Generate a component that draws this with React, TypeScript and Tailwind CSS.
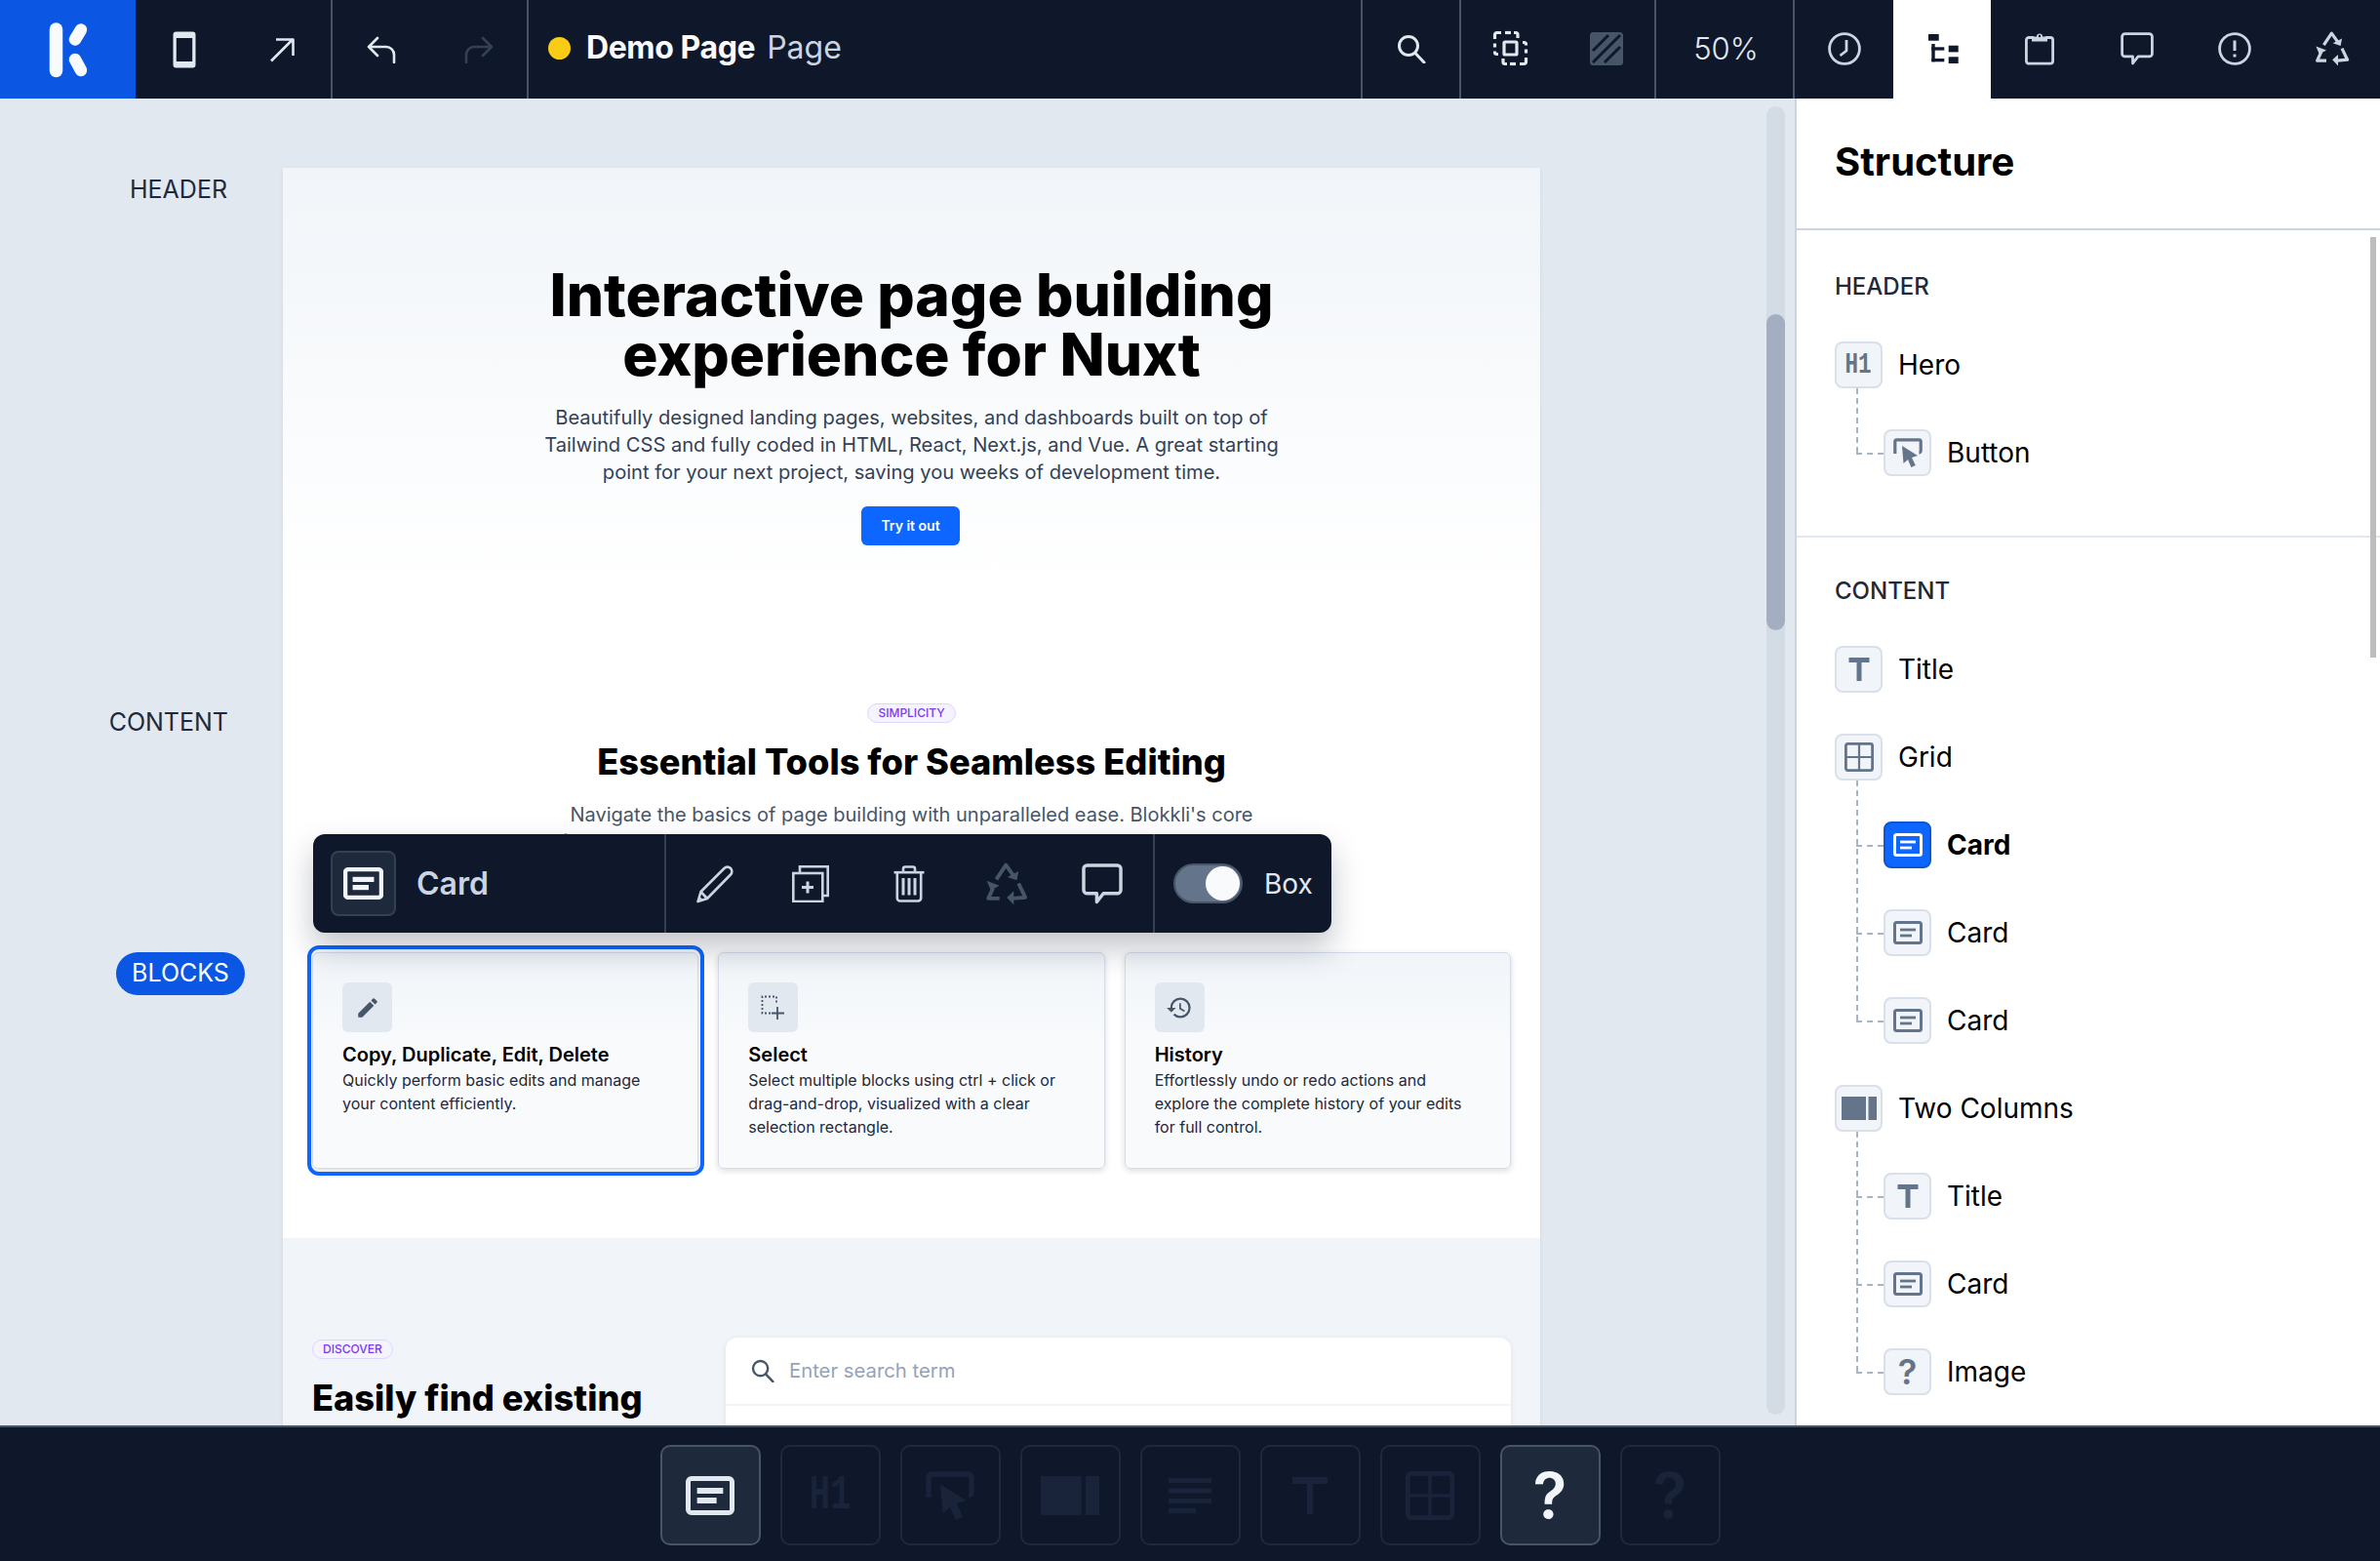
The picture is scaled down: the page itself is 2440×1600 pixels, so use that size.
import React from "react";
import { MdEdit, MdHistory } from "react-icons/md";

const S = { fill: "none", stroke: "currentColor", strokeLinecap: "round" as const, strokeLinejoin: "round" as const };

function Logo() {
  return (
    <svg width="139" height="100" viewBox="0 0 139 100" fill="none" stroke="#f8fafc" strokeLinecap="round">
      <path d="M57.5 30V72.5" strokeWidth="13.5" />
      <path d="M83 30.5L77 40.5" strokeWidth="12.5" />
      <path d="M77 61L83 72" strokeWidth="12.5" />
    </svg>
  );
}
function Phone() {
  return (
    <svg width="24" height="38" viewBox="0 0 24 38">
      <path fillRule="evenodd" fill="currentColor" d="M3.5 0.5h17a3 3 0 0 1 3 3v31a3 3 0 0 1-3 3h-17a3 3 0 0 1-3-3v-31a3 3 0 0 1 3-3zM3.8 7v24h16.4V7z" />
    </svg>
  );
}
function ArrowNE() {
  return (
    <svg width="26" height="26" viewBox="0 0 26 26" {...S} strokeWidth="2.6" strokeLinecap="butt">
      <path d="M2 24.5L24 2.5M7 2.5H24.5V19" />
    </svg>
  );
}
function Undo({ flip }: { flip?: boolean }) {
  return (
    <svg width="30" height="28" viewBox="0 0 30 28" {...S} strokeWidth="2.6" className={flip ? "-scale-x-100" : ""}>
      <path d="M11 2L2 11L11 20M2 11H20a8 8 0 0 1 8 8V27" />
    </svg>
  );
}
function Search({ size = 30 }: { size?: number }) {
  return (
    <svg width={size} height={size} viewBox="0 0 30 30" {...S} strokeWidth="3">
      <circle cx="12" cy="12" r="9.5" />
      <path d="M19 19.5L28 29" />
    </svg>
  );
}
function SelectCorner() {
  return (
    <>
      <path d="M2.5 9V4.5a2 2 0 0 1 2-2H9" />
      <path d="M13 2.5h6" />
      <path d="M22 2.5h2a2 2 0 0 1 2 2V8" />
      <path d="M2.5 13.5v4" />
      <path d="M2.5 21.5v1a2 2 0 0 0 2 2h1.5" />
    </>
  );
}
function SelectIcon() {
  return (
    <svg width="37" height="37" viewBox="0 0 37 37" fill="none" stroke="currentColor" strokeWidth="3.2">
      <SelectCorner />
      <g transform="rotate(180 18.5 18.5)">
        <SelectCorner />
      </g>
      <rect x="12" y="12" width="13" height="13" rx="1" />
    </svg>
  );
}
function Hatch() {
  return (
    <svg width="34" height="34" viewBox="0 0 34 34">
      <rect width="34" height="34" rx="3.5" fill="#475569" />
      <path d="M3 19L19 3M3 31L31 3M15 31L31 15" stroke="#0f172a" strokeWidth="3" />
    </svg>
  );
}
function Clock() {
  return (
    <svg width="34" height="34" viewBox="0 0 34 34" {...S} strokeWidth="2.8" strokeLinecap="butt">
      <circle cx="17" cy="17" r="15.4" />
      <path d="M19 8V19L12.5 24" />
    </svg>
  );
}
function Tree() {
  return (
    <svg width="31" height="30" viewBox="0 0 31 30" fill="#0f172a">
      <rect width="10.7" height="6.7" />
      <rect x="3.3" y="10" width="3.4" height="18.3" />
      <rect x="3.3" y="13.3" width="13" height="3.3" />
      <rect x="3.3" y="25" width="13" height="3.3" />
      <rect x="20.7" y="11.7" width="10" height="6.7" />
      <rect x="20.7" y="23.3" width="10" height="6.7" />
    </svg>
  );
}
function Clipboard() {
  return (
    <svg width="30" height="34" viewBox="0 0 30 34" {...S} strokeWidth="2.8">
      <path d="M8 5.5H4a2.6 2.6 0 0 0-2.6 2.6v21.5A2.6 2.6 0 0 0 4 32.2h22a2.6 2.6 0 0 0 2.6-2.6V8.1A2.6 2.6 0 0 0 26 5.5h-4" />
      <path fill="currentColor" stroke="none" d="M7 4.5h5a3 3 0 0 1 6 0h5v5H7z" />
      <circle cx="15" cy="4" r="1.2" fill="#0f172a" stroke="none" />
    </svg>
  );
}
function Comment({ size = 34 }: { size?: number }) {
  return (
    <svg width={size} height={size} viewBox="0 0 34 34" {...S} strokeWidth="2.8">
      <path d="M4.5 1.6H29.5a2.9 2.9 0 0 1 2.9 2.9V22a2.9 2.9 0 0 1-2.9 2.9H18L12.5 32V24.9H4.5A2.9 2.9 0 0 1 1.6 22V4.5A2.9 2.9 0 0 1 4.5 1.6z" />
    </svg>
  );
}
function Alert() {
  return (
    <svg width="34" height="34" viewBox="0 0 34 34" {...S} strokeWidth="2.8">
      <circle cx="17" cy="17" r="15.4" />
      <path d="M17 8.5V19" strokeWidth="3" strokeLinecap="butt" />
      <path d="M17 22.5V25.5" strokeWidth="3" strokeLinecap="butt" />
    </svg>
  );
}
function RecycleIcon({ size = 44 }: { size?: number }) {
  return (
    <svg width={size} height={size} viewBox="0 0 43 45" fill="none" stroke="currentColor" strokeWidth="4" strokeLinejoin="round">
      <path d="M10.7 17.7L20.7 2.7L29 14.3" />
      <path fill="currentColor" stroke="none" d="M34 9.3L32.3 18.7L22.3 15.3Z" />
      <path d="M14 37.7H2.3L7.3 26.7" />
      <path fill="currentColor" stroke="none" d="M0.7 19.3L14 24.3L5 29.3Z" />
      <path d="M34 22L41 36.5L28 37.7" />
      <path fill="currentColor" stroke="none" d="M29 30V44.3L21.7 36.7Z" />
    </svg>
  );
}
function CardIcon({ w = 30, h = 24, sw = 3, line = 2.8 }: { w?: number; h?: number; sw?: number; line?: number }) {
  return (
    <svg width={w} height={h} viewBox="0 0 30 24" fill="none" stroke="currentColor" strokeWidth={sw}>
      <rect x="1.5" y="1.5" width="27" height="21" rx="2" />
      <path d="M7 9H23" strokeWidth={line} />
      <path d="M7 15H19" strokeWidth={line} />
    </svg>
  );
}
function CursorIcon({ size = 30 }: { size?: number }) {
  return (
    <svg width={size} height={size} viewBox="0 0 30 30" fill="none" stroke="currentColor">
      <path d="M1.8 16V3.5A1.8 1.8 0 0 1 3.6 1.8H26.4A1.8 1.8 0 0 1 28.2 3.5V13A1.8 1.8 0 0 1 26.4 14.8" strokeWidth="3.2" />
      <path fill="currentColor" stroke="none" d="M9 8L25 18L19 20L22.8 28L18.4 30L15 22L10.5 26Z" />
    </svg>
  );
}
function GridIcon({ size = 30 }: { size?: number }) {
  return (
    <svg width={size} height={size} viewBox="0 0 30 30" fill="none" stroke="currentColor" strokeWidth="2.8">
      <rect x="1.4" y="1.4" width="27.2" height="27.2" rx="2" />
      <path d="M15 1.4V28.6M1.4 15H28.6" strokeWidth="2.2" />
    </svg>
  );
}
function ColumnsIcon({ w = 36, h = 24 }: { w?: number; h?: number }) {
  return (
    <svg width={w} height={h} viewBox="0 0 36 24" fill="currentColor">
      <rect width="25" height="24" />
      <rect x="27.5" width="8.5" height="24" />
    </svg>
  );
}
function TIcon({ w = 22, h = 24 }: { w?: number; h?: number }) {
  return (
    <svg width={w} height={h} viewBox="0 0 22 24" fill="currentColor">
      <path d="M0.5 0H21.5V5H13.5V24H8.5V5H0.5Z" />
    </svg>
  );
}
function ThinT() {
  return (
    <svg width="36" height="38" viewBox="0 0 36 38" fill="currentColor">
      <path d="M0 0H36V7H21V38H15V7H0Z" />
    </svg>
  );
}
function LinesIcon() {
  return (
    <svg width="44" height="36" viewBox="0 0 44 36" fill="currentColor">
      <rect width="44" height="5" />
      <rect y="10.5" width="44" height="5" />
      <rect y="21" width="44" height="5" />
      <rect y="31" width="28" height="5" />
    </svg>
  );
}
function Pencil() {
  return (
    <svg width="38" height="40" viewBox="0 0 38 40" {...S} strokeWidth="2.6">
      <path d="M1.5 38L4.5 28L28.5 4A4.4 4.4 0 0 1 35 10.5L11 35L1.5 38zM4.5 28L11 35" />
      <path fill="currentColor" stroke="none" d="M1 38.5L3 32.5L7.5 37z" />
    </svg>
  );
}
function Duplicate() {
  return (
    <svg width="38" height="38" viewBox="0 0 38 38" fill="none" stroke="currentColor" strokeWidth="2.6">
      <rect x="1.3" y="8" width="30" height="29" />
      <path d="M8 7.5V1.3H36.7V31H32" />
      <path d="M10 22.5H22M16 16.5V28.5" strokeWidth="3" />
    </svg>
  );
}
function Trash() {
  return (
    <svg width="32" height="38" viewBox="0 0 32 38" fill="none" stroke="currentColor" strokeWidth="2.6">
      <path d="M0.5 7.2H31.5" />
      <path d="M10 7V3.5A2 2 0 0 1 12 1.5H20A2 2 0 0 1 22 3.5V7" />
      <path d="M3.8 7.2V33.5A3 3 0 0 0 6.8 36.5H25.2A3 3 0 0 0 28.2 33.5V7.2" />
      <path d="M10 13V30.5M16 13V30.5M22 13V30.5" strokeWidth="3" />
    </svg>
  );
}
function MarqueePlus() {
  return (
    <svg width="26" height="26" viewBox="0 0 26 26" fill="none" stroke="#475569" strokeWidth="1.8">
      <path d="M1.5 15V1.5H16V9" strokeDasharray="2 2" />
      <path d="M1.5 17V18.5H10" strokeDasharray="2 2" />
      <path d="M17 12V25M11 18.5H24" />
    </svg>
  );
}

function TopBtn({ children, className = "w-[100px]" }: { children: React.ReactNode; className?: string }) {
  return <div className={`flex shrink-0 items-center justify-center ${className}`}>{children}</div>;
}

function Label({ children, className = "" }: { children: React.ReactNode; className?: string }) {
  return <div className={`absolute text-[25px] leading-8 text-[#1e293b] ${className}`}>{children}</div>;
}

function Badge({ children }: { children: React.ReactNode }) {
  return (
    <span className="flex h-5 items-center rounded-full border border-[#ddd6fe] bg-[#f5f3ff] px-[10px] text-[12px] font-medium uppercase text-[#7c3aed]">
      {children}
    </span>
  );
}

function FeatureCard({ icon, title, text }: { icon: React.ReactNode; title: string; text: React.ReactNode }) {
  return (
    <div className="h-[222px] rounded-md border border-[#d5dce8] bg-gradient-to-b from-[#f1f5f9] to-[#f8fafc] to-40% px-[30px] pt-[30px] shadow-[0_2px_6px_rgba(15,23,42,0.15)]">
      <div className="flex h-[51px] w-[51px] items-center justify-center rounded-md bg-[#e2e8f0] text-[#475569]">{icon}</div>
      <div className="mt-[9px] text-[20px] font-semibold leading-7 text-black">{title}</div>
      <div className="text-[16px] leading-[24px] text-[#1e293b]">{text}</div>
    </div>
  );
}

type Node = { label: string; icon: React.ReactNode; active?: boolean; children?: Node[] };

const h1 = (
  <span className="inline-block scale-x-75 font-['Liberation_Mono',monospace] text-[30px] font-bold leading-none">H1</span>
);
const q = <span className="text-[36px] font-semibold leading-none">?</span>;

function IconBox({ node }: { node: Node }) {
  return (
    <div
      className={`flex h-12 w-[49px] shrink-0 items-center justify-center rounded-lg border-2 ${
        node.active ? "border-[#0b57d0] bg-[#0d66ff] text-white" : "border-[#d9e0ea] bg-[#f1f5f9] text-[#64748b]"
      }`}
    >
      {node.icon}
    </div>
  );
}

function TreeRow({ node }: { node: Node }) {
  return (
    <div className="flex h-12 items-center gap-4">
      <IconBox node={node} />
      <span className={`text-[28px] leading-none text-black ${node.active ? "font-bold text-[#0f172a]" : ""}`}>{node.label}</span>
    </div>
  );
}

function TreeItem({ node }: { node: Node }) {
  const kids = node.children ?? [];
  return (
    <div className="relative">
      <TreeRow node={node} />
      {kids.length > 0 && (
        <div className="absolute bottom-6 left-[22px] top-12 border-l-2 border-dashed border-[#a8b4c8]" />
      )}
      {kids.map((k, i) => (
        <div key={i} className="relative mt-[42px] pl-[50px]">
          <div className="absolute left-[22px] top-6 w-[28px] border-t-2 border-dashed border-[#a8b4c8]" />
          <TreeRow node={k} />
        </div>
      ))}
    </div>
  );
}

const card = <CardIcon />;
const headerTree: Node[] = [{ label: "Hero", icon: h1, children: [{ label: "Button", icon: <CursorIcon /> }] }];
const contentTree: Node[] = [
  { label: "Title", icon: <TIcon /> },
  {
    label: "Grid",
    icon: <GridIcon />,
    children: [
      { label: "Card", icon: card, active: true },
      { label: "Card", icon: card },
      { label: "Card", icon: card },
    ],
  },
  {
    label: "Two Columns",
    icon: <ColumnsIcon />,
    children: [
      { label: "Title", icon: <TIcon /> },
      { label: "Card", icon: card },
      { label: "Image", icon: q },
    ],
  },
];

function Tile({ active, children }: { active?: boolean; children: React.ReactNode }) {
  return (
    <div
      className={`flex h-[103px] w-[103px] items-center justify-center rounded-[10px] border-2 ${
        active ? "border-[#475569] bg-[#1e293b] text-[#e2e8f0]" : "border-[#1e293b] text-[#19233a]"
      }`}
    >
      {children}
    </div>
  );
}

export default function App() {
  return (
    <div className="relative flex h-[1600px] w-[2440px] flex-col overflow-hidden bg-white font-['Inter',sans-serif]">
      {/* Top bar */}
      <header className="flex h-[101px] shrink-0 bg-[#0f172a] text-[#e2e8f0]">
        <div className="w-[139px] shrink-0 bg-[#0b57e3]">
          <Logo />
        </div>
        <TopBtn><Phone /></TopBtn>
        <TopBtn className="w-[102px] border-r-2 border-[#475569]"><ArrowNE /></TopBtn>
        <TopBtn><Undo /></TopBtn>
        <TopBtn className="w-[101px] border-r-2 border-[#475569] text-[#334155]"><Undo flip /></TopBtn>
        <div className="flex flex-1 items-center gap-3 pb-[3px] pl-[20px] text-[32px] leading-none">
          <span className="mr-[4px] h-[23px] w-[23px] rounded-full bg-[#facc15]" />
          <span className="font-bold tracking-[-0.4px] text-[#f8fafc]">Demo Page</span>
          <span className="font-normal text-[#cbd5e1]">Page</span>
        </div>
        <TopBtn className="w-[103px] border-x-2 border-[#475569] pb-[2px]"><Search /></TopBtn>
        <TopBtn className="w-[100px] pb-[2px]"><SelectIcon /></TopBtn>
        <TopBtn className="w-[100px] border-r-2 border-[#475569] pb-[2px]"><Hatch /></TopBtn>
        <div className="flex w-[142px] shrink-0 items-center justify-center border-r-2 border-[#475569] pb-[2px] pl-[3px] text-[31px] font-light leading-none">50%</div>
        <TopBtn className="w-[101px] pb-[2px] text-[#cbd5e1]"><Clock /></TopBtn>
        <TopBtn className="w-[100px] bg-white pb-[2px] pl-[2px]"><Tree /></TopBtn>
        <TopBtn className="w-[100px] pb-[2px] text-[#cbd5e1]"><Clipboard /></TopBtn>
        <TopBtn className="w-[100px] pb-[2px] text-[#cbd5e1]"><Comment /></TopBtn>
        <TopBtn className="w-[100px] pb-[2px] text-[#cbd5e1]"><Alert /></TopBtn>
        <TopBtn className="w-[99px] pb-[2px] text-[#cbd5e1]"><RecycleIcon size={36} /></TopBtn>
      </header>

      {/* Middle */}
      <div className="flex min-h-0 flex-1">
        <main className="relative min-w-0 flex-1 overflow-hidden bg-[#e2e8f0]">
          <Label className="right-[1607px] top-[77px]">HEADER</Label>
          <Label className="right-[1606px] top-[623px]">CONTENT</Label>
          <div className="absolute left-[119px] top-[875px] flex h-[44px] w-[132px] items-center justify-center rounded-full bg-[#0b57e3] text-[25px] text-white">
            BLOCKS
          </div>

          {/* Page */}
          <article className="ml-[290px] mt-[71px] w-[1289px] bg-white shadow-[0_1px_4px_rgba(15,23,42,0.08)]">
            <section className="bg-gradient-to-b from-[#f1f5f9] to-white to-[430px] px-[30px] pt-[100px] text-center">
              <h1 className="text-[60.4px] font-extrabold leading-[61px] text-black">
                Interactive page building
                <br />
                experience for Nuxt
              </h1>
              <p className="mt-5 text-[20.1px] leading-7 text-[#334155]">
                Beautifully designed landing pages, websites, and dashboards built on top of
                <br />
                Tailwind CSS and fully coded in HTML, React, Next.js, and Vue. A great starting
                <br />
                point for your next project, saving you weeks of development time.
              </p>
              <div className="mt-[21px] flex justify-center pr-[2px]">
                <span className="flex h-10 w-[101px] items-center justify-center rounded-md bg-[#0d66ff] pb-[2px] text-[14px] font-semibold text-white">
                  Try it out
                </span>
              </div>
              <div className="mt-[162px] flex justify-center">
                <Badge>Simplicity</Badge>
              </div>
              <h2 className="mt-5 text-[36.2px] font-extrabold leading-10 text-black">Essential Tools for Seamless Editing</h2>
              <p className="mt-5 text-[20px] leading-7 text-[#475569]">
                Navigate the basics of page building with unparalleled ease. Blokkli's core
                <br />
                functionalities include copying, duplicating, editing, and deleting blocks with
              </p>
            </section>
            <section className="px-[30px] pb-[71px] pt-[99px]">
              <div className="grid grid-cols-3 gap-5">
                <div className="relative">
                  <div className="absolute -bottom-[7px] -left-[5px] -right-[6px] -top-[7px] rounded-xl border-[4px] border-[#0d66ff]" />
                  <FeatureCard
                    icon={<MdEdit size={26} />}
                    title="Copy, Duplicate, Edit, Delete"
                    text={<>Quickly perform basic edits and manage<br />your content efficiently.</>}
                  />
                </div>
                <FeatureCard
                  icon={<MarqueePlus />}
                  title="Select"
                  text={<>Select multiple blocks using ctrl + click or<br />drag-and-drop, visualized with a clear<br />selection rectangle.</>}
                />
                <FeatureCard
                  icon={<MdHistory size={28} />}
                  title="History"
                  text={<>Effortlessly undo or redo actions and<br />explore the complete history of your edits<br />for full control.</>}
                />
              </div>
            </section>
            <section className="flex gap-[100px] bg-[#f1f5f9] px-[30px] pt-[102px]">
              <div className="flex w-[324px] shrink-0 flex-col items-start pt-[2px]">
                <Badge>Discover</Badge>
                <h2 className="mt-5 w-[420px] text-[36.2px] font-extrabold leading-10 text-black">
                  Easily find existing
                  <br />
                  content
                </h2>
              </div>
              <div className="h-[200px] flex-1 rounded-xl bg-white shadow-[0_1px_6px_rgba(15,23,42,0.08)]">
                <div className="flex h-[70px] items-center gap-[15px] border-b-2 border-[#f1f5f9] pl-[26px] text-[20.3px] text-[#94a3b8]">
                  <span className="text-[#475569]"><Search size={24} /></span>
                  Enter search term
                </div>
              </div>
            </section>
          </article>

          {/* Canvas scrollbar */}
          <div className="absolute left-[1811px] top-[8px] h-[1341px] w-[19px] rounded-full bg-[#d3dbe5]">
            <div className="ml-0 mt-[213px] h-[324px] w-full rounded-full bg-[#a3afc0]" />
          </div>

          {/* Floating block toolbar */}
          <div className="absolute left-[321px] top-[754px] flex h-[101px] w-[1044px] rounded-xl bg-[#0f172a] text-[#cbd5e1] shadow-[0_16px_32px_rgba(15,23,42,0.25)]">
            <div className="flex w-[362px] shrink-0 items-center gap-[21px] border-r-2 border-[#334155] pl-[18px]">
              <div className="flex h-[67px] w-[67px] items-center justify-center rounded-lg border-2 border-[#334155] bg-[#1e293b] text-[#f1f5f9]">
                <CardIcon w={41} h={33} sw={3.2} line={3.8} />
              </div>
              <span className="text-[32px] font-semibold leading-none">Card</span>
            </div>
            <div className="flex w-[501px] shrink-0 items-center border-r-2 border-[#334155]">
              <div className="flex w-[100px] justify-center"><Pencil /></div>
              <div className="flex w-[100px] -translate-x-[2px] justify-center"><Duplicate /></div>
              <div className="flex w-[100px] justify-center"><Trash /></div>
              <div className="flex w-[100px] justify-center text-[#475569]"><RecycleIcon size={44} /></div>
              <div className="flex w-[100px] -translate-x-[2px] justify-center"><Comment size={42} /></div>
            </div>
            <div className="flex flex-1 items-center gap-[22px] pl-[19px]">
              <div className="flex h-[41px] w-[71px] items-center justify-end rounded-full border-2 border-[#475569] bg-[#64748b] pr-[1px]">
                <div className="h-[35px] w-[35px] rounded-full bg-[#f8fafc]" />
              </div>
              <span className="text-[28px] leading-none text-[#e2e8f0]">Box</span>
            </div>
          </div>
        </main>

        {/* Structure panel */}
        <aside className="relative w-[600px] shrink-0 overflow-hidden border-l-2 border-[#cbd5e1] bg-white">
          <div className="flex h-[135px] items-center border-b-2 border-[#cbd5e1] pb-[3px] pl-[39px]">
            <h2 className="text-[40px] font-bold leading-none text-black">Structure</h2>
          </div>
          <div className="h-[315px] border-b-2 border-[#e2e8f0] px-[39px] pt-[42px]">
            <div className="mb-10 text-[24px] font-medium leading-8 text-[#1e293b]">HEADER</div>
            {headerTree.map((n, i) => <TreeItem key={i} node={n} />)}
          </div>
          <div className="px-[39px] pt-[39px]">
            <div className="mb-10 text-[24px] font-medium leading-8 text-[#1e293b]">CONTENT</div>
            <div className="flex flex-col gap-[42px]">
              {contentTree.map((n, i) => <TreeItem key={i} node={n} />)}
            </div>
          </div>
          <div className="absolute left-[588px] top-[142px] h-[431px] w-[6px] bg-[#bdbdbd]" />
        </aside>
      </div>

      {/* Bottom bar */}
      <footer className="flex h-[139px] shrink-0 items-start justify-center border-t-2 border-[#475569] bg-[#0f172a] pt-[18px]">
        <div className="flex gap-5">
          <Tile active><CardIcon w={50} h={40} sw={3} line={3.6} /></Tile>
          <Tile><span className="inline-block scale-x-[0.72] font-['Liberation_Mono',monospace] text-[50px] font-bold leading-none">H1</span></Tile>
          <Tile><CursorIcon size={50} /></Tile>
          <Tile><ColumnsIcon w={60} h={40} /></Tile>
          <Tile><LinesIcon /></Tile>
          <Tile><ThinT /></Tile>
          <Tile><GridIcon size={50} /></Tile>
          <Tile active><span className="text-[64px] font-semibold leading-none text-[#f1f5f9]">?</span></Tile>
          <Tile><span className="text-[64px] font-semibold leading-none">?</span></Tile>
        </div>
      </footer>
    </div>
  );
}
